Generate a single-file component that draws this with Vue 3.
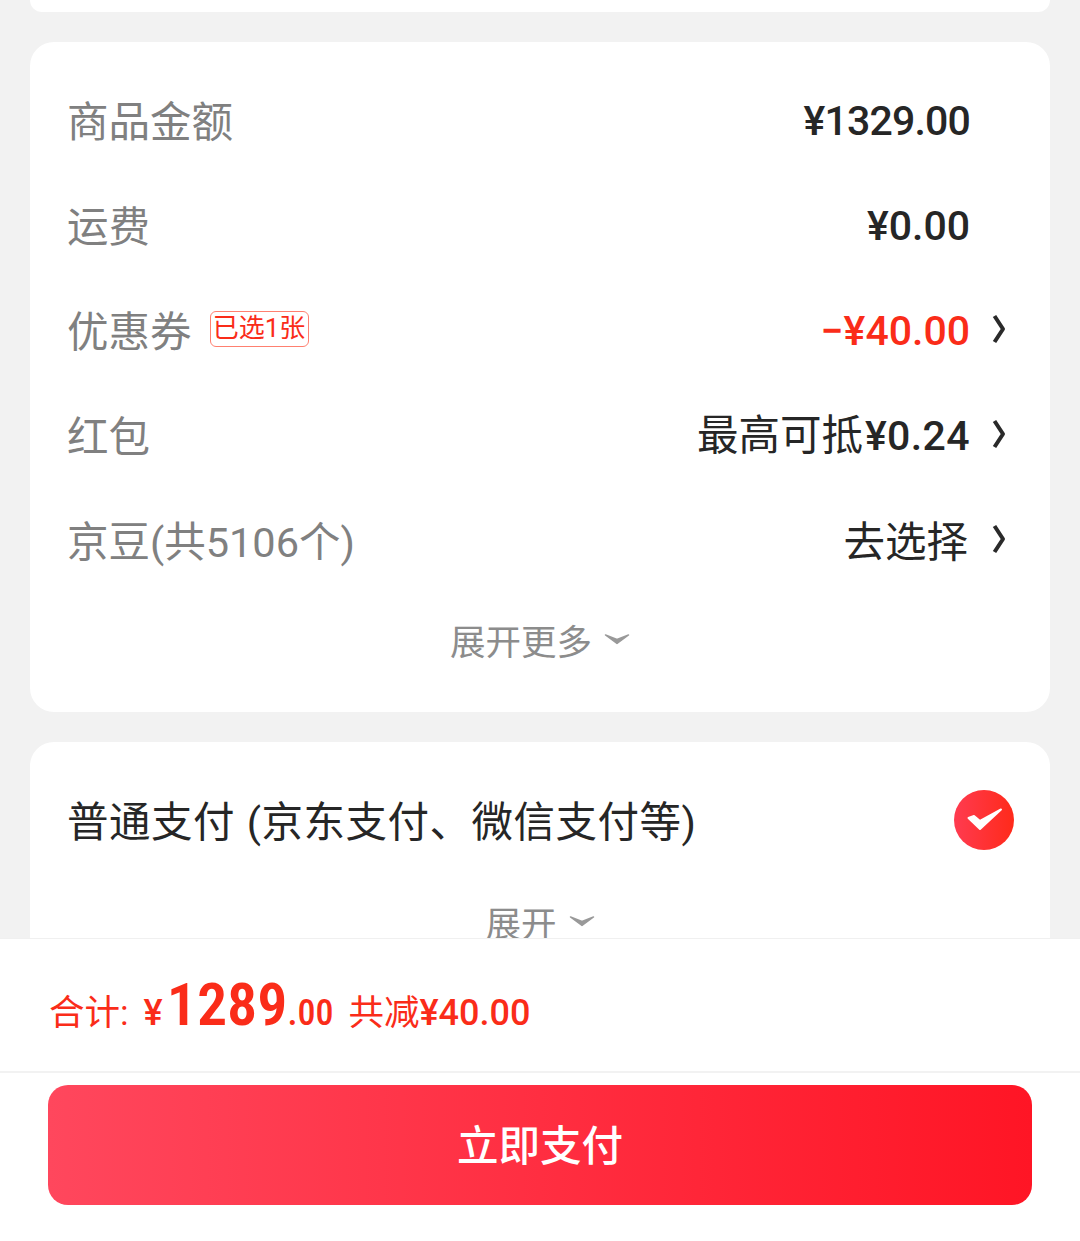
<template>
  <div class="page">
    <div class="scroll">
      <div class="card card-top"></div>

      <div class="card card-price">
        <div class="row" v-for="row in rows" :key="row.label">
          <div class="label">
            <span>{{ row.label }}</span>
            <span v-if="row.tag" class="tag">{{ row.tag }}</span>
          </div>
          <div class="value" :class="{ red: row.red, latin: !row.prefix, mixed: row.prefix && row.value, narrow: row.narrow }">
            <span v-if="row.prefix" class="prefix">{{ row.prefix }}</span>{{ row.value }}
          </div>
          <div class="arrow-box">
            <svg v-if="row.arrow" width="16" height="32" viewBox="0 0 16 32">
              <path d="M3.5 3 L12 16 L3.5 29" fill="none" stroke="#2a2a2a" stroke-width="4" stroke-linejoin="round" />
            </svg>
          </div>
        </div>
        <div class="more">
          <span>展开更多</span>
          <svg width="26" height="12" viewBox="0 0 26 12">
            <path d="M1.5 2 L13 6.5 L24.5 2 L13 10.5 Z" fill="#999" stroke="#999" stroke-width="1.5" stroke-linejoin="round" />
          </svg>
        </div>
      </div>

      <div class="card card-pay">
        <div class="pay-row">
          <span class="pay-name">普通支付 (京东支付、微信支付等)</span>
          <svg class="check" width="60" height="60" viewBox="0 0 60 60">
            <defs>
              <linearGradient id="checkGrad" x1="0" y1="0" x2="1" y2="0">
                <stop offset="0" stop-color="#ff3b50" />
                <stop offset="1" stop-color="#ff2a1a" />
              </linearGradient>
            </defs>
            <circle cx="30" cy="30" r="30" fill="url(#checkGrad)" />
            <path d="M14.5 28 L20 26 L26 31 L47 19.5 L26 39 Z" fill="#fff" stroke="#fff" stroke-width="2" stroke-linejoin="round" />
          </svg>
        </div>
        <div class="more more-pay">
          <span>展开</span>
          <svg width="26" height="12" viewBox="0 0 26 12">
            <path d="M1.5 2 L13 6.5 L24.5 2 L13 10.5 Z" fill="#999" stroke="#999" stroke-width="1.5" stroke-linejoin="round" />
          </svg>
        </div>
      </div>
    </div>

    <div class="footer">
      <div class="total">
        <span class="t-label">合计:</span>
        <span class="t-yen">¥</span>
        <span class="t-int">1289</span>
        <span class="t-dec">.00</span>
        <span class="t-save"><span class="t-save-cn">共减</span>¥40.00</span>
      </div>
      <div class="pay-wrap">
        <div class="pay-btn">立即支付</div>
      </div>
    </div>
  </div>
</template>

<script setup>
const rows = [
  { label: '商品金额', value: '¥1329.00', narrow: true },
  { label: '运费', value: '¥0.00' },
  { label: '优惠券', tag: '已选1张', value: '−¥40.00', red: true, arrow: true },
  { label: '红包', prefix: '最高可抵', value: '¥0.24', arrow: true },
  { label: '京豆(共5106个)', prefix: '去选择', value: '', arrow: true }
]
</script>

<style>
html, body { background: #f2f2f2; overflow: hidden; }
</style>

<style scoped>
.page { width: 1080px; height: 1241px; display: flex; flex-direction: column; overflow: hidden; background: #f2f2f2; font-family: Roboto, "Noto Sans CJK SC", sans-serif; }
.scroll { height: 938px; overflow: hidden; padding: 0 30px; box-sizing: border-box; flex: none; }
.card { background: #fff; border-radius: 24px; }
.card-top { height: 12px; border-radius: 0 0 24px 24px; margin-bottom: 30px; }
.card-price { height: 670px; padding-top: 24px; box-sizing: border-box; margin-bottom: 30px; }
.row { height: 105px; display: flex; align-items: center; padding-left: 37px; }
.label { flex: 1; display: flex; align-items: center; font-size: 41.5px; color: #808080; }
.tag { margin-left: 18px; height: 36px; width: 99px; box-sizing: border-box; border: 1px solid #ff8070; border-radius: 6px; color: #fa2c19; font-size: 26px; line-height: 33px; text-align: center; white-space: nowrap; }
.value { font-size: 41px; font-weight: 500; color: #262626; white-space: nowrap; }
.value.latin { margin-top: 5px; }
.value.mixed { margin-top: -4px; letter-spacing: 0.4px; }
.value.narrow { letter-spacing: -0.8px; }
.value.red { color: #fa2c19; }
.prefix { font-size: 41.5px; font-weight: 400; margin-right: 2px; letter-spacing: 0; }
.arrow-box { width: 80px; flex: none; display: flex; align-items: center; padding-left: 21px; box-sizing: border-box; }
.more { display: flex; align-items: center; justify-content: center; gap: 12px; font-size: 35.5px; color: #8c8c8c; height: 80px; margin-top: 8px; }
.card-pay { height: 300px; }
.pay-row { height: 155px; display: flex; align-items: center; justify-content: space-between; padding: 0 36px 0 37px; }
.pay-name { font-size: 41.5px; color: #262626; white-space: nowrap; word-spacing: 1px; letter-spacing: 0.5px; margin-bottom: 2px; }
.check { flex: none; }
.more-pay { height: 40px; margin-top: 4px; }
.footer { flex: 1; background: #fff; border-top: 1px solid #f0f0f0; box-sizing: border-box; }
.total { height: 134px; display: flex; align-items: baseline; padding: 30px 0 0 49px; box-sizing: border-box; border-bottom: 2px solid #f2f2f2; color: #fa2c19; white-space: nowrap; }
.t-label { font-size: 35.5px; }
.t-yen { font-size: 36px; font-weight: 500; margin-left: 15px; }
.t-int { font-size: 60px; font-weight: 600; margin-left: 4px; font-stretch: 87%; }
.t-dec { font-size: 36px; font-weight: 500; font-stretch: 87%; }
.t-save { font-size: 36px; font-weight: 500; margin-left: 15px; }
.t-save-cn { font-weight: 400; font-size: 35.5px; }
.pay-wrap { padding: 12px 48px 0; }
.pay-btn { height: 120px; padding-bottom: 5px; box-sizing: border-box; border-radius: 20px; background: linear-gradient(90deg, #ff475d, #ff1525); color: #fff; font-size: 41.5px; font-weight: 500; display: flex; align-items: center; justify-content: center; }
</style>
